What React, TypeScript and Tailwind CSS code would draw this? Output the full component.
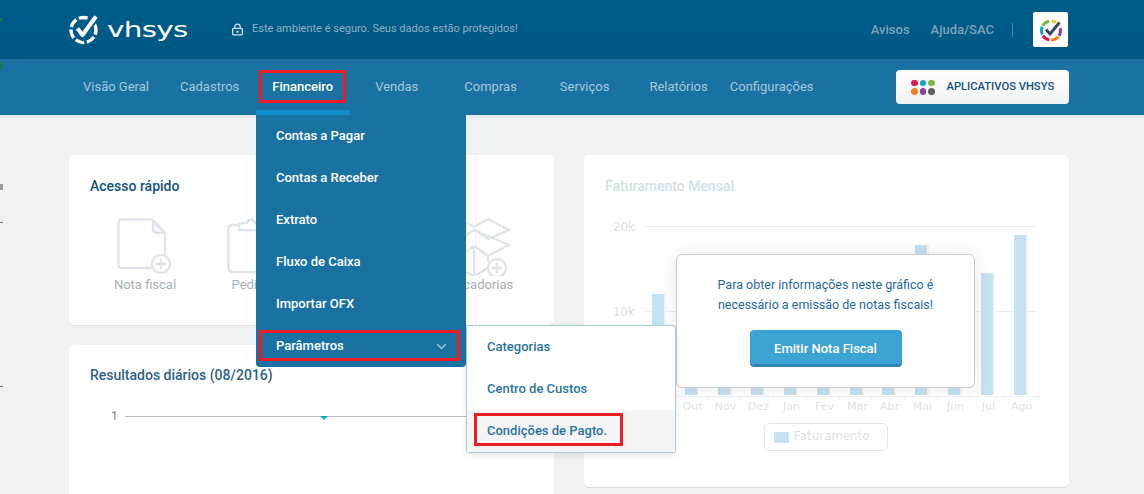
import { ChevronDown, LockKeyhole } from 'lucide-react';

const navItems = [
  { label: 'Visão Geral', cls: 'ml-[83px]' },
  { label: 'Cadastros', cls: 'ml-[31px]' },
  { label: 'Financeiro', cls: 'ml-[33px] font-medium text-white' },
  { label: 'Vendas', cls: 'ml-[42px]' },
  { label: 'Compras', cls: 'ml-[46px]' },
  { label: 'Serviços', cls: 'ml-[43px]' },
  { label: 'Relatórios', cls: 'ml-[40px]' },
  { label: 'Configurações', cls: 'ml-[22px]' },
];

const financeItems = ['Contas a Pagar', 'Contas a Receber', 'Extrato', 'Fluxo de Caixa', 'Importar OFX'];

const bars = [
  { x: 652, top: 294, label: '' },
  { x: 685, top: 300, label: 'Out' },
  { x: 718, top: 310, label: 'Nov' },
  { x: 751, top: 320, label: 'Dez' },
  { x: 784, top: 300, label: 'Jan' },
  { x: 817, top: 330, label: 'Fev' },
  { x: 850, top: 300, label: 'Mar' },
  { x: 882, top: 320, label: 'Abr' },
  { x: 915, top: 245, label: 'Mai' },
  { x: 948, top: 290, label: 'Jun' },
  { x: 981, top: 273, label: 'Jul' },
  { x: 1014, top: 235, label: 'Ago' },
];

function Logo() {
  return (
    <svg width="33" height="33" viewBox="0 0 33 33" fill="none">
      <circle cx="15.5" cy="17" r="12.5" stroke="white" strokeWidth="3.4" strokeDasharray="9 2.6" transform="rotate(-20 15.5 17)" />
      <path d="M9.5 15.5 L14.5 22 L28 3.5" stroke="#005a87" strokeWidth="8" />
      <path d="M9.5 15.5 L14.5 22 L28 3.5" stroke="white" strokeWidth="4" strokeLinejoin="round" />
    </svg>
  );
}

function AppLogo() {
  const segs = [
    { c: '#f4c520', r: -85 },
    { c: '#7db53f', r: -150 },
    { c: '#17a6bb', r: 155 },
    { c: '#e4174f', r: 100 },
    { c: '#f47f20', r: 40 },
    { c: '#8e3f9c', r: -15 },
  ];
  return (
    <svg width="24" height="24" viewBox="0 0 24 24" fill="none">
      {segs.map((s) => (
        <circle key={s.c} cx="12" cy="12.5" r="9.5" stroke={s.c} strokeWidth="3" strokeDasharray="8 52" transform={`rotate(${s.r} 12 12.5)`} />
      ))}
      <path d="M7 11.5 L11 16 L20.5 4.5" stroke="white" strokeWidth="5.5" />
      <path d="M7 11.5 L11 16 L20.5 4.5" stroke="#3a4868" strokeWidth="3" />
    </svg>
  );
}

function AppsDots() {
  const colors = ['#e4174f', '#17a6bb', '#7db53f', '#f47f20', '#8e3f9c', '#5f5f5f'];
  return (
    <div className="grid grid-cols-3 gap-x-[2px] gap-y-[2px]">
      {colors.map((c) => (
        <span key={c} className="block h-[6.5px] w-[6.5px] rounded-full" style={{ background: c }} />
      ))}
    </div>
  );
}

function PlusBadge({ cx, cy }: { cx: number; cy: number }) {
  return (
    <g>
      <circle cx={cx} cy={cy} r="9" fill="white" stroke="#dfe4ea" strokeWidth="2.4" />
      <path d={`M${cx - 5.5} ${cy} H${cx + 5.5} M${cx} ${cy - 5.5} V${cy + 5.5}`} stroke="#dfe4ea" strokeWidth="2.4" />
    </g>
  );
}

function DocIcon() {
  return (
    <svg width="56" height="58" viewBox="0 0 56 58" fill="none" stroke="#dfe4ea" strokeWidth="2.4" strokeLinejoin="round">
      <path d="M5 1.5 H35 L48 15 V50 H5 Q1.5 50 1.5 47 V5 Q1.5 1.5 5 1.5 Z" />
      <path d="M36 2 V11 Q36 15 40 15 H48 Z" fill="#dfe4ea" fillOpacity="0.35" />
      <PlusBadge cx={44} cy={46} />
    </svg>
  );
}

function ClipboardIcon() {
  return (
    <svg width="56" height="58" viewBox="0 0 56 58" fill="none" stroke="#dfe4ea" strokeWidth="2.4" strokeLinejoin="round">
      <path d="M12 7 H6 Q1.5 7 1.5 11 V50 Q1.5 54 6 54 H44 V7 H36" />
      <path d="M12 12 V7 Q12 5 15 5 H20 Q21 1.5 24 1.5 Q27 1.5 28 5 H33 Q36 5 36 7 V12 Z" />
    </svg>
  );
}

function BoxIcon() {
  return (
    <svg width="76" height="58" viewBox="0 0 76 58" fill="none" stroke="#dfe4ea" strokeWidth="2.2" strokeLinejoin="round" className="-ml-[6px]">
      <path d="M3 9 L24 1 L38 9 L52 1 L73 12 L52 21 L38 12 L24 21 Z" />
      <path d="M38 12 L73 27 L52 38 L38 28 L24 38 L3 26" />
      <path d="M38 28 V56 M12 38 V46 L38 58 L52 50" />
      <path d="M52 38 V44" />
      <PlusBadge cx={61} cy={50} />
    </svg>
  );
}

function QuickItem({ icon, label, width = 'w-[110px]' }: { icon?: React.ReactNode; label: string; width?: string }) {
  return (
    <div className={`flex ${width} flex-col items-center`}>
      <div className="flex h-[58px] justify-center">{icon}</div>
      <span className="-mt-px text-[13px] leading-[20px] text-[#a2b0bb]">{label}</span>
    </div>
  );
}

function Chart() {
  const ox = 584;
  const oy = 210;
  return (
    <svg width="485" height="250" viewBox="0 0 485 250" className="block" style={{ fontFamily: '"DejaVu Sans", sans-serif' }}>
      <path d={`M${643 - ox} ${226.5 - oy} H${1038 - ox} M${643 - ox} ${311.5 - oy} H${1038 - ox}`} stroke="#eeeeee" />
      <text x={635 - ox} y={231 - oy} textAnchor="end" fontSize="12" fill="#dddddd">20k</text>
      <text x={635 - ox} y={316 - oy} textAnchor="end" fontSize="12" fill="#dddddd">10k</text>
      {bars.map((b) => (
        <g key={b.x}>
          <rect x={b.x - ox + 12} y={b.top - oy - 1} width="2" height={396 - b.top} fill="#f2f4f5" />
          <rect x={b.x - ox} y={b.top - oy} width="12" height={395 - b.top} fill="#c5e2f2" />
          {b.label && (
            <text x={b.x - ox + 7.5} y={410 - oy} textAnchor="middle" fontSize="11" fill="#e4e1df">
              {b.label}
            </text>
          )}
          <path d={`M${b.x - ox - 10.5} ${396 - oy} V${400 - oy}`} stroke="#eef1f5" />
        </g>
      ))}
      <path d={`M${643 - ox} ${396.5 - oy} H${1038 - ox} M${1038.5 - ox} ${396 - oy} V${400 - oy}`} stroke="#eef1f5" />
    </svg>
  );
}

export default function App() {
  return (
    <div
      className="relative h-[494px] w-full overflow-hidden bg-[#eff1f3]"
      style={{ fontFamily: 'Roboto, sans-serif' }}
    >
      {/* header */}
      <header className="flex h-[59px] items-center bg-gradient-to-b from-[#005c8a] to-[#005883] pl-[68px] pr-[76px]">
        <Logo />
        <span
          className="ml-[6px] inline-block w-[80px] origin-left scale-x-[1.34] text-[22px] leading-none tracking-tight text-white"
          style={{ fontFamily: '"DejaVu Sans", sans-serif' }}
        >
          vhsys
        </span>
        <LockKeyhole size={13} strokeWidth={2.4} className="ml-[44px] text-[#cfe0ea]" />
        <span className="ml-[8px] text-[11px] text-[#8db0c4]">Este ambiente é seguro. Seus dados estão protegidos!</span>
        <div className="ml-auto flex items-center text-[13px] font-medium text-[#7da3ba]">
          <span>Avisos</span>
          <span className="ml-[21px]">Ajuda/SAC</span>
          <span className="ml-[18px] h-[14px] w-px bg-[#4a86a6]" />
          <div className="ml-[20px] flex h-[35px] w-[35px] items-center justify-center rounded-[2px] bg-white">
            <AppLogo />
          </div>
        </div>
      </header>

      {/* nav */}
      <nav className="relative flex h-[56px] items-center bg-[#1a72a2] pr-[75px] text-[13px] text-[#a6c8da] shadow-[0_2px_4px_rgba(0,0,0,0.06)]">
        {navItems.map((item) => (
          <span key={item.label} className={item.cls}>
            {item.label}
          </span>
        ))}
        <button className="ml-auto flex h-[34px] w-[173px] items-center rounded-[4px] bg-gradient-to-b from-white to-[#f0f2f5] pl-[15px] text-[11.2px] font-medium text-[#11517c]">
          <AppsDots />
          <span className="ml-[12px]">APLICATIVOS VHSYS</span>
        </button>
        <span className="absolute bottom-0 left-[256px] h-[5px] w-[94px] bg-[#0f8dcf]" />
      </nav>

      {/* content */}
      <main className="grid grid-cols-[485px_485px] gap-x-[30px] pl-[69px] pt-[40px]">
        <div className="flex flex-col gap-[20px]">
          <section className="h-[170px] rounded-[5px] bg-white px-[21px] pt-[21px] shadow-[0_1px_1px_rgba(0,0,0,0.08)]">
            <h2 className="text-[14px] font-medium leading-[20px] text-[#12537f]">Acesso rápido</h2>
            <div className="mt-[22px] flex">
              <QuickItem icon={<DocIcon />} label="Nota fiscal" />
              <QuickItem icon={<ClipboardIcon />} label="Pedidos" />
              <QuickItem label="Clientes" width="w-[112px]" />
              <QuickItem icon={<BoxIcon />} label="Mercadorias" />
            </div>
          </section>
          <section className="h-[200px] rounded-[5px] bg-white px-[21px] pt-[20px]">
            <h2 className="text-[14px] font-medium leading-[20px] text-[#2c6285]">Resultados diários (08/2016)</h2>
            <div className="mt-[21px] flex items-center pl-[21px]">
              <span className="w-[14px] text-[12px] leading-[20px] text-[#7d8a93]">1</span>
              <div className="relative h-px flex-1 bg-[#bcbcbc]">
                <span className="absolute left-[195px] top-0 h-0 w-0 border-x-[4px] border-t-[4px] border-x-transparent border-t-[#17a5c4]" />
              </div>
            </div>
          </section>
        </div>

        <section className="relative h-[332px] rounded-[5px] bg-white pt-[21px] shadow-[0_1px_1px_rgba(0,0,0,0.1)]">
          <h2 className="pl-[21px] text-[14px] font-medium leading-[20px] text-[#d3e1ea]">Faturamento Mensal</h2>
          <div className="mt-[14px]">
            <Chart />
          </div>
          {/* legend */}
          <div
            className="absolute left-[180px] top-[268px] flex h-[28px] w-[124px] items-center rounded-[5px] border border-[#e6e6e6] pl-[9px] text-[11.5px] tracking-[0.2px] text-[#dfdfdf]"
            style={{ fontFamily: '"DejaVu Sans", sans-serif' }}
          >
            <span className="h-[11px] w-[15px] rounded-[1px] bg-[#c5e2f2]" />
            <span className="ml-[5px]">Faturamento</span>
          </div>
          {/* aviso */}
          <div className="absolute left-[92px] top-[99px] flex h-[134px] w-[299px] flex-col items-center rounded-[6px] border border-[#cccccc] bg-white pt-[20px] shadow-[0_0_18px_rgba(0,0,0,0.09)]">
            <p className="text-center text-[12.5px] leading-[20px] text-[#1d6a99]">
              Para obter informações neste gráfico é
              <br />
              necessário a emissão de notas fiscais!
            </p>
            <button className="mt-[15px] h-[37px] w-[152px] rounded-[4px] border-b-[3px] border-[#2f86b3] bg-[#3da2d4] pt-[3px] text-[13px] font-medium text-white">
              Emitir Nota Fiscal
            </button>
          </div>
        </section>
      </main>

      {/* dropdown Financeiro */}
      <div className="absolute left-[256px] top-[115px] w-[210px] rounded-b-[4px] bg-[#1a72a2]">
        {financeItems.map((label) => (
          <div key={label} className="flex h-[42px] items-center pl-[20px] text-[13px] font-medium text-white">
            {label}
          </div>
        ))}
        <div className="flex h-[42px] items-center justify-between pl-[20px] pr-[17px] text-[13px] font-medium text-white">
          Parâmetros
          <ChevronDown size={15} strokeWidth={2.5} className="text-[#8fbbd3]" />
        </div>

        <div className="absolute left-[210px] top-[210px] w-[210px] overflow-hidden rounded-[3px] border border-[#a9cbdc] bg-white text-[13px] font-medium text-[#2a73a1] shadow-[0_2px_6px_rgba(0,0,0,0.1)]">
          <div className="flex h-[42px] items-center pl-[20px]">Categorias</div>
          <div className="flex h-[42px] items-center pl-[20px]">Centro de Custos</div>
          <div className="flex h-[42px] items-center bg-[#f4f4f4] pl-[20px]">Condições de Pagto.</div>
        </div>
      </div>

      {/* marcações */}
      <span className="absolute left-[259px] top-[70px] h-[33px] w-[87px] border-[3px] border-[#ed1c24]" />
      <span className="absolute left-[259px] top-[330px] h-[31px] w-[201px] border-[3px] border-[#ed1c24]" />
      <span className="absolute left-[474px] top-[413px] h-[33px] w-[149px] border-[3px] border-[#ed1c24]" />

      {/* restos na margem */}
      <span className="absolute left-0 top-[18px] h-[3px] w-[2px] bg-[#1c7a3a]" />
      <span className="absolute left-0 top-[62px] h-[7px] w-[2px] bg-[#1c7a3a]" />
      <span className="absolute left-0 top-[184px] h-[6px] w-[3px] bg-[#9a9a9a]" />
      <span className="absolute left-0 top-[222px] h-px w-[3px] bg-[#777777]" />
      <span className="absolute left-0 top-[386px] h-px w-[3px] bg-[#777777]" />
    </div>
  );
}
